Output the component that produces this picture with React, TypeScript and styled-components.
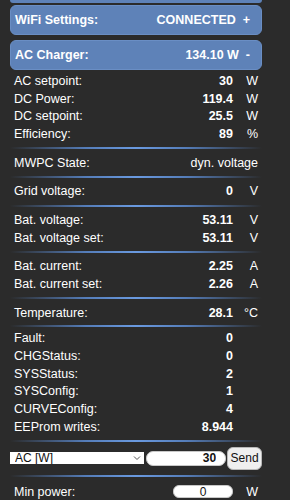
import React from "react";
import styled, { createGlobalStyle } from "styled-components";

const GlobalStyle = createGlobalStyle`
  html, body {
    margin: 0;
    padding: 0;
    background: #2b2b2b;
  }
  body {
    font-family: "Liberation Sans", Arial, sans-serif;
    color: #ffffff;
    overflow: hidden;
  }
`;

const Page = styled.div`
  width: 252px;
  margin-left: 10px;
  display: flex;
  flex-direction: column;
`;

const BarCap = styled.div`
  height: 3px;
  background: #5e82b8;
  border-radius: 0 0 5px 5px;
  margin-bottom: 2px;
`;

const Bar = styled.div`
  height: 30px;
  box-sizing: border-box;
  display: flex;
  align-items: center;
  justify-content: space-between;
  padding: 0 11px 0 4px;
  margin-bottom: 5px;
  background: #5e82b8;
  border: 1px solid #6a8ec4;
  border-radius: 6px;
  font-size: 12.5px;
  font-weight: bold;
  white-space: pre;
`;

const Rows = styled.div`
  display: flex;
  flex-direction: column;
  padding: 0 4px;
  margin-top: -3px;
`;

const Row = styled.div<{ $tall?: boolean }>`
  display: grid;
  grid-template-columns: 1fr auto 25px;
  align-items: center;
  height: ${(p) => (p.$tall ? "20px" : "17.7px")};
  font-size: 12.5px;
`;

const Label = styled.span`
  white-space: nowrap;
`;

const Value = styled.span<{ $plain?: boolean; $span?: boolean }>`
  font-weight: ${(p) => (p.$plain ? "normal" : "bold")};
  text-align: right;
  grid-column: ${(p) => (p.$span ? "2 / 4" : "auto")};
`;

const Unit = styled.span`
  text-align: right;
`;

const Separator = styled.div<{ $tight?: boolean }>`
  height: 2px;
  margin: ${(p) => (p.$tight ? "3px -4px" : "4.5px -4px")};
  background: linear-gradient(
    to right,
    rgba(90, 140, 215, 0) 0%,
    rgba(95, 145, 220, 0.8) 30%,
    #6a9ae0 50%,
    rgba(95, 145, 220, 0.8) 70%,
    rgba(90, 140, 215, 0) 100%
  );
`;

const FormRow = styled.div`
  display: flex;
  align-items: center;
  height: 23px;
  margin: 0 -4px 1px -4px;
`;

const SelectWrap = styled.div`
  position: relative;
  width: 135px;
  height: 12px;
`;

const Select = styled.select`
  appearance: none;
  width: 100%;
  height: 12px;
  box-sizing: border-box;
  border: none;
  border-radius: 0;
  background: #ffffff;
  color: #111;
  font-family: "Liberation Sans", Arial, sans-serif;
  font-size: 12px;
  line-height: 12px;
  padding: 0 0 0 5px;
  display: block;
`;

const Chevron = styled.svg`
  position: absolute;
  right: 3px;
  top: 3px;
  pointer-events: none;
`;

const NumberInput = styled.input<{ $center?: boolean; $bold?: boolean }>`
  box-sizing: border-box;
  border: 1px solid #c8c8c8;
  background: #ffffff;
  color: #111;
  font-family: "Liberation Sans", Arial, sans-serif;
  font-size: 12px;
  font-weight: ${(p) => (p.$bold ? "bold" : "normal")};
  text-align: ${(p) => (p.$center ? "center" : "right")};
  outline: none;
`;

const SetInput = styled(NumberInput)`
  width: 80px;
  height: 15px;
  margin-left: 2px;
  border-radius: 7px;
  padding: 0 9px 0 4px;
`;

const SendButton = styled.button`
  width: 35px;
  height: 23px;
  margin-left: 1px;
  box-sizing: border-box;
  border: 1px solid #b8b8b8;
  border-radius: 6px;
  background: #efefef;
  color: #111;
  font-family: "Liberation Sans", Arial, sans-serif;
  font-size: 12px;
  padding: 0;
`;

const MinInput = styled(NumberInput)`
  width: 60px;
  height: 13px;
  border-radius: 6px;
  padding: 0;
  justify-self: end;
`;

type Item = { label: string; value: string; unit?: string };

const acRows: Item[] = [
  { label: "AC setpoint:", value: "30", unit: "W" },
  { label: "DC Power:", value: "119.4", unit: "W" },
  { label: "DC setpoint:", value: "25.5", unit: "W" },
  { label: "Efficiency:", value: "89", unit: "%" },
];

const batVoltRows: Item[] = [
  { label: "Bat. voltage:", value: "53.11", unit: "V" },
  { label: "Bat. voltage set:", value: "53.11", unit: "V" },
];

const batCurRows: Item[] = [
  { label: "Bat. current:", value: "2.25", unit: "A" },
  { label: "Bat. current set:", value: "2.26", unit: "A" },
];

const statusRows: Item[] = [
  { label: "Fault:", value: "0" },
  { label: "CHGStatus:", value: "0" },
  { label: "SYSStatus:", value: "2" },
  { label: "SYSConfig:", value: "1" },
  { label: "CURVEConfig:", value: "4" },
  { label: "EEProm writes:", value: "8.944" },
];

const DataRows = ({ items }: { items: Item[] }) => (
  <>
    {items.map((it) => (
      <Row key={it.label}>
        <Label>{it.label}</Label>
        <Value>{it.value}</Value>
        <Unit>{it.unit || ""}</Unit>
      </Row>
    ))}
  </>
);

export default function App() {
  return (
    <>
      <GlobalStyle />
      <Page>
        <BarCap />
        <Bar>
          <span>WiFi Settings:</span>
          <span>{"CONNECTED\u00a0\u00a0+"}</span>
        </Bar>
        <Bar>
          <span>AC Charger:</span>
          <span>{"134.10 W\u00a0\u00a0-"}</span>
        </Bar>
        <Rows>
          <DataRows items={acRows} />
          <Separator />
          <Row>
            <Label>MWPC State:</Label>
            <Value $plain $span>
              dyn. voltage
            </Value>
          </Row>
          <Separator />
          <DataRows items={[{ label: "Grid voltage:", value: "0", unit: "V" }]} />
          <Separator />
          <DataRows items={batVoltRows} />
          <Separator />
          <DataRows items={batCurRows} />
          <Separator />
          <DataRows items={[{ label: "Temperature:", value: "28.1", unit: "°C" }]} />
          <Separator $tight />
          <DataRows items={statusRows} />
          <Separator />
          <FormRow>
            <SelectWrap>
              <Select defaultValue="ac">
                <option value="ac">AC [W]</option>
                <option value="dc">DC [W]</option>
              </Select>
              <Chevron width="8" height="6" viewBox="0 0 8 6">
                <path d="M1 1.5 L4 4.5 L7 1.5" fill="none" stroke="#555" strokeWidth="1" />
              </Chevron>
            </SelectWrap>
            <SetInput $bold defaultValue="30" />
            <SendButton>Send</SendButton>
          </FormRow>
          <Separator />
          <Row $tall>
            <Label>Min power:</Label>
            <MinInput $center defaultValue="0" />
            <Unit>W</Unit>
          </Row>
        </Rows>
      </Page>
    </>
  );
}
